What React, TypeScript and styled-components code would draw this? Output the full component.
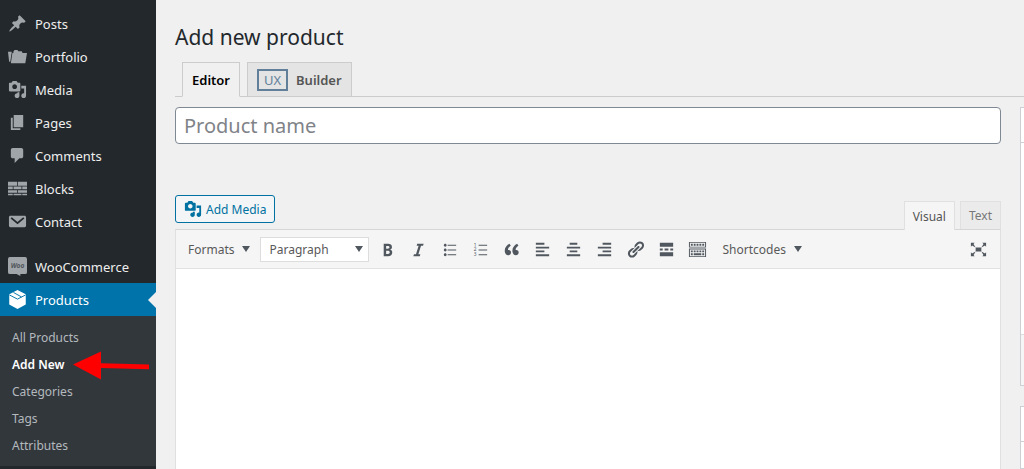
import React from "react";
import styled, { createGlobalStyle, css } from "styled-components";

const GlobalStyle = createGlobalStyle`
  *, *::before, *::after { box-sizing: border-box; }
  body {
    margin: 0;
    background: #f0f0f0;
    color: #444;
    font-family: "Noto Sans", "Open Sans", sans-serif;
    font-size: 13px;
  }
  button, input, select, textarea { font: inherit; color: inherit; margin: 0; }
  button { cursor: pointer; }
`;

const Page = styled.div`
  display: flex;
  min-height: 100vh;
`;

/* ---------- Admin menu ---------- */

const Sidebar = styled.nav`
  flex: 0 0 156px;
  padding-top: 7px;
  background: #23282d;
`;

const MenuList = styled.ul`
  list-style: none;
  margin: 0;
  padding: 0;
`;

const MenuItem = styled.li<{ $separated?: boolean }>`
  margin-top: ${(p) => (p.$separated ? "12px" : "0")};
`;

const MenuLink = styled.a<{ $current?: boolean }>`
  position: relative;
  display: flex;
  align-items: center;
  gap: 8px;
  height: 33px;
  padding-left: 8px;
  color: ${(p) => (p.$current ? "#fff" : "#eee")};
  background: ${(p) => (p.$current ? "#0073aa" : "transparent")};
  text-decoration: none;

  svg {
    width: 19px;
    height: 19px;
    flex: none;
    fill: ${(p) => (p.$current ? "#fff" : "#a0a5aa")};
  }

  ${(p) =>
    p.$current &&
    css`
      &::after {
        content: "";
        position: absolute;
        right: 0;
        top: 9px;
        border: 8px solid transparent;
        border-left-width: 0;
        border-right-color: #f0f0f0;
      }
    `}
`;

const SubMenu = styled.ul`
  list-style: none;
  margin: 0;
  padding: 8px 0 7px;
  background: #32373c;
`;

const SubItem = styled.li`
  position: relative;
`;

const SubLink = styled.a<{ $current?: boolean }>`
  display: block;
  padding-left: 12px;
  font-size: 12px;
  line-height: 27px;
  color: ${(p) => (p.$current ? "#fff" : "#b4b9be")};
  font-weight: ${(p) => (p.$current ? 600 : 400)};
  text-decoration: none;
`;

const Pointer = styled.svg`
  position: absolute;
  left: 73px;
  top: 0;
  width: 77px;
  height: 30px;
  fill: #f00;
`;

/* ---------- Content ---------- */

const Content = styled.main`
  flex: 1;
  min-width: 0;
  display: flex;
  flex-direction: column;
  padding: 22px 0 0 19px;
`;

const Title = styled.h1`
  margin: 0;
  font-size: 21px;
  line-height: 30px;
  font-weight: 400;
  color: #23282d;
`;

const ModeTabs = styled.div`
  display: flex;
  gap: 7px;
  margin-top: 10px;
  padding-left: 7px;
  border-bottom: 1px solid #ccc;
`;

const ModeTab = styled.button<{ $active?: boolean }>`
  display: flex;
  align-items: center;
  gap: 8px;
  height: 35px;
  margin-bottom: -1px;
  padding: 0 9px;
  border: 1px solid #ccc;
  border-bottom-color: ${(p) => (p.$active ? "#f0f0f0" : "#ccc")};
  background: ${(p) => (p.$active ? "#f0f0f0" : "#e4e4e4")};
  color: ${(p) => (p.$active ? "#000" : "#555")};
  font-weight: 600;
`;

const UxBadge = styled.span`
  width: 31px;
  border: 2px solid #627f9a;
  font-size: 13px;
  line-height: 18px;
  font-weight: 400;
  color: #627f9a;
  text-align: center;
`;

const Columns = styled.div`
  flex: 1;
  display: grid;
  grid-template-columns: minmax(0, 1fr) 4px;
  gap: 19px;
  padding-top: 10px;
`;

const Primary = styled.div`
  display: flex;
  flex-direction: column;
  min-width: 0;
`;

const NameInput = styled.input`
  width: 100%;
  height: 37px;
  padding: 0 8px;
  border: 1px solid #7e8993;
  border-radius: 4px;
  background: #fff;
  font-size: 20px;
  outline: none;

  &::placeholder { color: #7f8388; opacity: 1; }
`;

const EditorHead = styled.div`
  display: flex;
  justify-content: space-between;
  align-items: flex-end;
  margin-top: 51px;
`;

const MediaButton = styled.button`
  display: flex;
  align-items: center;
  gap: 4px;
  height: 28px;
  margin-bottom: 6px;
  padding: 0 8px;
  border: 1px solid #0071a1;
  border-radius: 3px;
  background: #f3f5f6;
  color: #0071a1;
  font-size: 12px;

  svg { width: 18px; height: 18px; fill: #0071a1; }
`;

const ViewTabs = styled.div`
  display: flex;
  gap: 5px;
`;

const ViewTab = styled.button<{ $active?: boolean }>`
  position: relative;
  height: ${(p) => (p.$active ? "29px" : "28px")};
  margin-bottom: ${(p) => (p.$active ? "-1px" : "0")};
  padding: 0 8px;
  border: 1px solid #e0e0e0;
  border-bottom: 0;
  background: ${(p) => (p.$active ? "#f5f5f5" : "#ebebeb")};
  color: ${(p) => (p.$active ? "#555" : "#777")};
  font-size: 12px;
`;

const EditorBox = styled.section`
  flex: 1;
  display: flex;
  flex-direction: column;
  border: 1px solid #e0e0e0;
  border-top-color: #d4d6d8;
  border-bottom: 0;
`;

const Toolbar = styled.div`
  display: flex;
  align-items: center;
  height: 39px;
  padding: 0 6px 0 12px;
  border-bottom: 1px solid #e2e2e2;
  background: #f5f5f5;
`;

const MenuButton = styled.button`
  display: flex;
  align-items: center;
  gap: 8px;
  padding: 0;
  border: 0;
  background: none;
  color: #595959;
  font-size: 12px;

  svg { width: 8px; height: 6px; fill: #50575e; }
`;

const SelectWrap = styled.label`
  position: relative;
  margin: 0 3px 0 10px;

  svg {
    position: absolute;
    right: 6px;
    top: 9px;
    width: 8px;
    height: 6px;
    fill: #50575e;
    pointer-events: none;
  }
`;

const FormatSelect = styled.select`
  display: block;
  appearance: none;
  width: 109px;
  height: 25px;
  padding: 0 8px;
  border: 1px solid #ddd;
  border-radius: 0;
  background: #fff;
  color: #595959;
  font-size: 12px;
`;

const ToolButton = styled.button`
  display: flex;
  align-items: center;
  justify-content: center;
  width: 31px;
  height: 28px;
  padding: 0;
  border: 0;
  background: none;

  svg { width: 19px; height: 19px; fill: #50575e; }
`;

const Spacer = styled.span`
  flex: 1;
`;

const Shortcodes = styled.div`
  margin-left: 9px;
`;

const Canvas = styled.textarea`
  flex: 1;
  display: block;
  width: 100%;
  min-height: 180px;
  padding: 12px;
  border: 0;
  resize: none;
  outline: none;
  background: #fff;
`;

const Side = styled.aside`
  display: flex;
  flex-direction: column;
  gap: 20px;
  overflow: hidden;
`;

const Panel = styled.section`
  border: 1px solid #ccd0d4;
  border-right: 0;
  background: #fff;
`;

const PanelHead = styled.div`
  height: 35px;
  border-bottom: 1px solid #ccd0d4;
`;

const PanelBody = styled.div<{ $height: number }>`
  height: ${(p) => p.$height}px;
`;

const PanelFoot = styled.div`
  height: 51px;
  border-top: 1px solid #ddd;
  background: #f5f5f5;
`;

/* ---------- Icons ---------- */

const Icon = ({ d }: { d: string }) => (
  <svg viewBox="0 0 20 20" aria-hidden="true">
    <path d={d} />
  </svg>
);

const Caret = () => (
  <svg viewBox="0 0 8 6" aria-hidden="true">
    <path d="M0 0h8L4 6z" />
  </svg>
);

const MEDIA =
  "M13 11V4c0-.55-.45-1-1-1h-1.67L9 1H5L3.67 3H2c-.55 0-1 .45-1 1v7c0 .55.45 1 1 1h10c.55 0 1-.45 1-1zM7 4.5c1.38 0 2.5 1.12 2.5 2.5S8.38 9.5 7 9.5 4.5 8.38 4.5 7 5.62 4.5 7 4.5zM14 6h5v10.5c0 1.38-1.12 2.5-2.5 2.5S14 17.88 14 16.5s1.12-2.5 2.5-2.5c.17 0 .34.02.5.05V9h-3V6zm-4 8.05V13h2v3.5c0 1.38-1.12 2.5-2.5 2.5S7 17.88 7 16.5 8.12 14 9.5 14c.17 0 .34.02.5.05z";

const BlocksIcon = () => (
  <svg viewBox="0 0 20 20" aria-hidden="true">
    <path d="M0 3h9.600v4H0zM10.400 3H20v4h-9.600zM0 8h5v2.800H0zM5.800 8h8.400v2.800H5.800zM15 8h5v2.800h-5zM0 11.800h9.600v2.600H0zM10.400 11.800H20v2.600h-9.600zM0 15.400h5V17H0zM5.800 15.400h8.400V17H5.800zM15 15.400h5V17h-5z" />
  </svg>
);

const WooIcon = () => (
  <svg viewBox="0 0 20 20" aria-hidden="true">
    <path d="M2 0h16a2 2 0 0 1 2 2v14a2 2 0 0 1-2 2h-5v2l-4-2H2a2 2 0 0 1-2-2V2a2 2 0 0 1 2-2z" />
    <text
      x="10"
      y="11.500"
      textAnchor="middle"
      fontSize="7"
      fontStyle="italic"
      fontWeight="700"
      style={{ fill: "#50565c" }}
    >
      Woo
    </text>
  </svg>
);

const ProductsIcon = () => (
  <svg viewBox="0 0 20 20" aria-hidden="true">
    <path d="M10 0l8.700 4.600v10.600L10 20l-8.700-4.800V4.600z" />
    <path
      d="M1.500 5.200L10 9.600l8.500-4.400M5.800 2.600l8.400 4.700"
      style={{ fill: "none", stroke: "#0073aa", strokeWidth: 1 }}
    />
  </svg>
);

const OrderedListIcon = () => (
  <svg viewBox="0 0 20 20" aria-hidden="true">
    <path d="M8 5h9v1H8zM8 10h9v1H8zM8 15h9v1H8z" />
    <text x="3" y="7" fontSize="5">1</text>
    <text x="3" y="12" fontSize="5">2</text>
    <text x="3" y="17" fontSize="5">3</text>
  </svg>
);

const KeyboardIcon = () => (
  <svg viewBox="0 0 20 20" aria-hidden="true">
    <path
      fillRule="evenodd"
      d="M1 2h18v6H1zM2 3v4h16V3zM1 9h18v9H1zM2 10v7h16v-7z"
    />
    <path d="M3 4h2v2H3zM6 4h2v2H6zM9 4h2v2H9zM12 4h2v2h-2zM15 4h2v2h-2zM3 11h2v2H3zM6 11h2v2H6zM9 11h2v2H9zM12 11h2v2h-2zM15 11h2v2h-2zM3 14h2v2H3zM6 14h8v2H6zM15 14h2v2h-2z" />
  </svg>
);

const menu: { label: string; icon: React.ReactNode }[] = [
  {
    label: "Posts",
    icon: (
      <Icon d="M10.440 3.020l1.820-1.820 6.360 6.350-1.830 1.820c-1.050-.68-2.480-.57-3.410.36l-.75.75c-.92.93-1.040 2.350-.35 3.410l-1.830 1.820-2.410-2.410-2.800 2.790c-.42.42-3.380 2.710-3.800 2.290s1.860-3.390 2.280-3.810l2.790-2.790L4.100 9.360l1.830-1.820c1.050.69 2.480.57 3.400-.36l.75-.75c.93-.92 1.050-2.350.36-3.410z" />
    ),
  },
  {
    label: "Portfolio",
    icon: (
      <Icon d="M0 5h4L2.400 15.500H1.200zM4.600 6.200L5.800 6V4.500L7 3.200h3l.8 1.300h3.700l.8 1.700H20L18.200 17H3z" />
    ),
  },
  { label: "Media", icon: <Icon d={MEDIA} /> },
  { label: "Pages", icon: <Icon d="M6 15V2h10v13H6zm-1 1h8v2H3V5h2v11z" /> },
  {
    label: "Comments",
    icon: (
      <Icon d="M5 2h9c1.100 0 2 .9 2 2v7c0 1.100-.9 2-2 2h-2l-5 5v-5H5c-1.100 0-2-.9-2-2V4c0-1.100.9-2 2-2z" />
    ),
  },
  { label: "Blocks", icon: <BlocksIcon /> },
  {
    label: "Contact",
    icon: (
      <Icon d="M2.500 4h15c.8 0 1.500.7 1.500 1.500v9c0 .8-.7 1.500-1.500 1.500h-15c-.8 0-1.500-.7-1.500-1.500v-9C1 4.700 1.700 4 2.500 4zM4 5.500L2.700 6.800 10 12.800l7.300-6L16 5.500l-6 5z" />
    ),
  },
];

const subMenu = ["All Products", "Add New", "Categories", "Tags", "Attributes"];

const tools: { label: string; icon: React.ReactNode }[] = [
  {
    label: "Bold",
    icon: (
      <Icon d="M6 4v13h4.540c1.370 0 2.460-.33 3.260-1 .8-.66 1.200-1.580 1.200-2.770 0-.84-.17-1.510-.51-2.010s-.9-.85-1.670-1.030v-.09c.57-.1 1.020-.4 1.360-.9s.51-1.130.51-1.910c0-1.140-.39-1.980-1.170-2.500C12.750 4.260 11.500 4 9.780 4H6zm2.570 5.150V6.260h1.360c.73 0 1.270.11 1.610.32.34.22.51.58.51 1.070 0 .54-.16.92-.47 1.150s-.82.35-1.510.35h-1.500zm0 2.190h1.600c1.440 0 2.160.53 2.160 1.610 0 .6-.17 1.050-.51 1.340s-.86.43-1.570.43H8.570v-3.380z" />
    ),
  },
  { label: "Italic", icon: <Icon d="M14.780 6h-2.130l-2.800 9h2.120l-.62 2H4.600l.62-2h2.140l2.800-9H8.030l.62-2h6.750z" /> },
  {
    label: "Bulleted list",
    icon: (
      <Icon d="M5.500 7C4.670 7 4 6.330 4 5.500 4 4.680 4.670 4 5.500 4 6.320 4 7 4.680 7 5.500 7 6.330 6.320 7 5.500 7zM8 5h9v1H8V5zm-2.500 7c-.83 0-1.500-.67-1.500-1.500C4 9.680 4.670 9 5.500 9c.82 0 1.500.68 1.500 1.500 0 .83-.68 1.500-1.500 1.500zM8 10h9v1H8v-1zm-2.500 7c-.83 0-1.500-.67-1.500-1.500 0-.82.67-1.500 1.500-1.500.82 0 1.500.68 1.500 1.500 0 .83-.68 1.500-1.500 1.500zM8 15h9v1H8v-1z" />
    ),
  },
  { label: "Numbered list", icon: <OrderedListIcon /> },
  {
    label: "Blockquote",
    icon: (
      <Icon d="M9.490 13.220c0-.74-.2-1.380-.61-1.900-.62-.78-1.830-.88-2.530-.72-.29-1.650 1.110-3.750 2.920-4.650L7.880 4c-2.730 1.300-5.420 4.280-4.960 8.050C3.210 14.430 4.590 16 6.540 16c.85 0 1.560-.25 2.120-.75s.83-1.180.83-2.030zm8.050 0c0-.74-.2-1.380-.61-1.900-.63-.78-1.830-.88-2.530-.72-.29-1.650 1.110-3.750 2.920-4.650L15.930 4c-2.730 1.300-5.410 4.280-4.950 8.050.29 2.380 1.660 3.950 3.610 3.950.85 0 1.560-.25 2.120-.75s.83-1.180.83-2.030z" />
    ),
  },
  { label: "Align left", icon: <Icon d="M12 5V3H3v2h9zm5 4V7H3v2h14zm-5 4v-2H3v2h9zm5 4v-2H3v2h14z" /> },
  { label: "Align center", icon: <Icon d="M14 5V3H6v2h8zm3 4V7H3v2h14zm-3 4v-2H6v2h8zm3 4v-2H3v2h14z" /> },
  { label: "Align right", icon: <Icon d="M17 5V3H8v2h9zm0 4V7H3v2h14zm0 4v-2H8v2h9zm0 4v-2H3v2h14z" /> },
  {
    label: "Insert link",
    icon: (
      <Icon d="M17.740 2.760c1.680 1.690 1.680 4.410 0 6.100l-1.530 1.520c-1.120 1.120-2.700 1.470-4.140 1.090l2.620-2.610.76-.77.76-.76c.84-.84.84-2.200 0-3.040-.84-.85-2.200-.85-3.040 0l-.77.76-3.380 3.380c-.37-1.440-.02-3.020 1.100-4.140l1.520-1.530c1.690-1.680 4.420-1.680 6.100 0zM8.590 13.430l5.340-5.340c.42-.42.42-1.100 0-1.520-.44-.43-1.130-.39-1.530 0l-5.330 5.340c-.42.42-.42 1.100 0 1.520.44.43 1.130.39 1.520 0zm-.76 2.290l4.140-4.150c.38 1.440.03 3.020-1.090 4.140l-1.520 1.530c-1.690 1.680-4.410 1.680-6.100 0-1.680-1.680-1.680-4.420 0-6.100l1.530-1.520c1.120-1.120 2.700-1.470 4.140-1.100l-4.140 4.150c-.85.84-.85 2.200 0 3.050.84.84 2.200.84 3.040 0z" />
    ),
  },
  { label: "Read more", icon: <Icon d="M17 7V3H3v4h14zM6 11V9H3v2h3zm6 0V9H8v2h4zm5 0V9h-3v2h3zm0 6v-4H3v4h14z" /> },
  { label: "Toolbar toggle", icon: <KeyboardIcon /> },
];

export default function App() {
  return (
    <>
      <GlobalStyle />
      <Page>
        <Sidebar aria-label="Main menu">
          <MenuList>
            {menu.map((item) => (
              <MenuItem key={item.label}>
                <MenuLink href="#">
                  {item.icon}
                  {item.label}
                </MenuLink>
              </MenuItem>
            ))}
            <MenuItem $separated>
              <MenuLink href="#">
                <WooIcon />
                WooCommerce
              </MenuLink>
            </MenuItem>
            <MenuItem>
              <MenuLink href="#" $current>
                <ProductsIcon />
                Products
              </MenuLink>
              <SubMenu>
                {subMenu.map((label) => (
                  <SubItem key={label}>
                    <SubLink href="#" $current={label === "Add New"}>
                      {label}
                    </SubLink>
                    {label === "Add New" && (
                      <Pointer viewBox="0 0 77 30" aria-hidden="true">
                        <path d="M0 13.500L28 .5v11.700l48 1.200v4.800l-48-1.200v11.500z" />
                      </Pointer>
                    )}
                  </SubItem>
                ))}
              </SubMenu>
            </MenuItem>
          </MenuList>
        </Sidebar>

        <Content>
          <Title>Add new product</Title>
          <ModeTabs>
            <ModeTab $active>Editor</ModeTab>
            <ModeTab>
              <UxBadge>UX</UxBadge>
              Builder
            </ModeTab>
          </ModeTabs>

          <Columns>
            <Primary>
              <NameInput type="text" aria-label="Product name" placeholder="Product name" />
              <EditorHead>
                <MediaButton>
                  <Icon d={MEDIA} />
                  Add Media
                </MediaButton>
                <ViewTabs>
                  <ViewTab $active>Visual</ViewTab>
                  <ViewTab>Text</ViewTab>
                </ViewTabs>
              </EditorHead>
              <EditorBox>
                <Toolbar>
                  <MenuButton>
                    Formats
                    <Caret />
                  </MenuButton>
                  <SelectWrap>
                    <FormatSelect aria-label="Paragraph format">
                      <option>Paragraph</option>
                    </FormatSelect>
                    <Caret />
                  </SelectWrap>
                  {tools.map((tool) => (
                    <ToolButton key={tool.label} aria-label={tool.label}>
                      {tool.icon}
                    </ToolButton>
                  ))}
                  <Shortcodes>
                    <MenuButton>
                      Shortcodes
                      <Caret />
                    </MenuButton>
                  </Shortcodes>
                  <Spacer />
                  <ToolButton aria-label="Fullscreen">
                    <Icon d="M7 8h6v4H7zm-5 5v4h4l-1.200-1.200L7 12l-3.800 2.200M14 17h4v-4l-1.200 1.200L13 12l2.200 3.800M14 3l1.300 1.300L13 8l3.800-2.200L18 7V3M6 3H2v4l1.200-1.200L7 8 4.700 4.300" />
                  </ToolButton>
                </Toolbar>
                <Canvas aria-label="Product description" />
              </EditorBox>
            </Primary>
            <Side>
              <Panel>
                <PanelHead />
                <PanelBody $height={191} />
                <PanelFoot />
              </Panel>
              <Panel>
                <PanelHead />
                <PanelBody $height={26} />
              </Panel>
            </Side>
          </Columns>
        </Content>
      </Page>
    </>
  );
}
